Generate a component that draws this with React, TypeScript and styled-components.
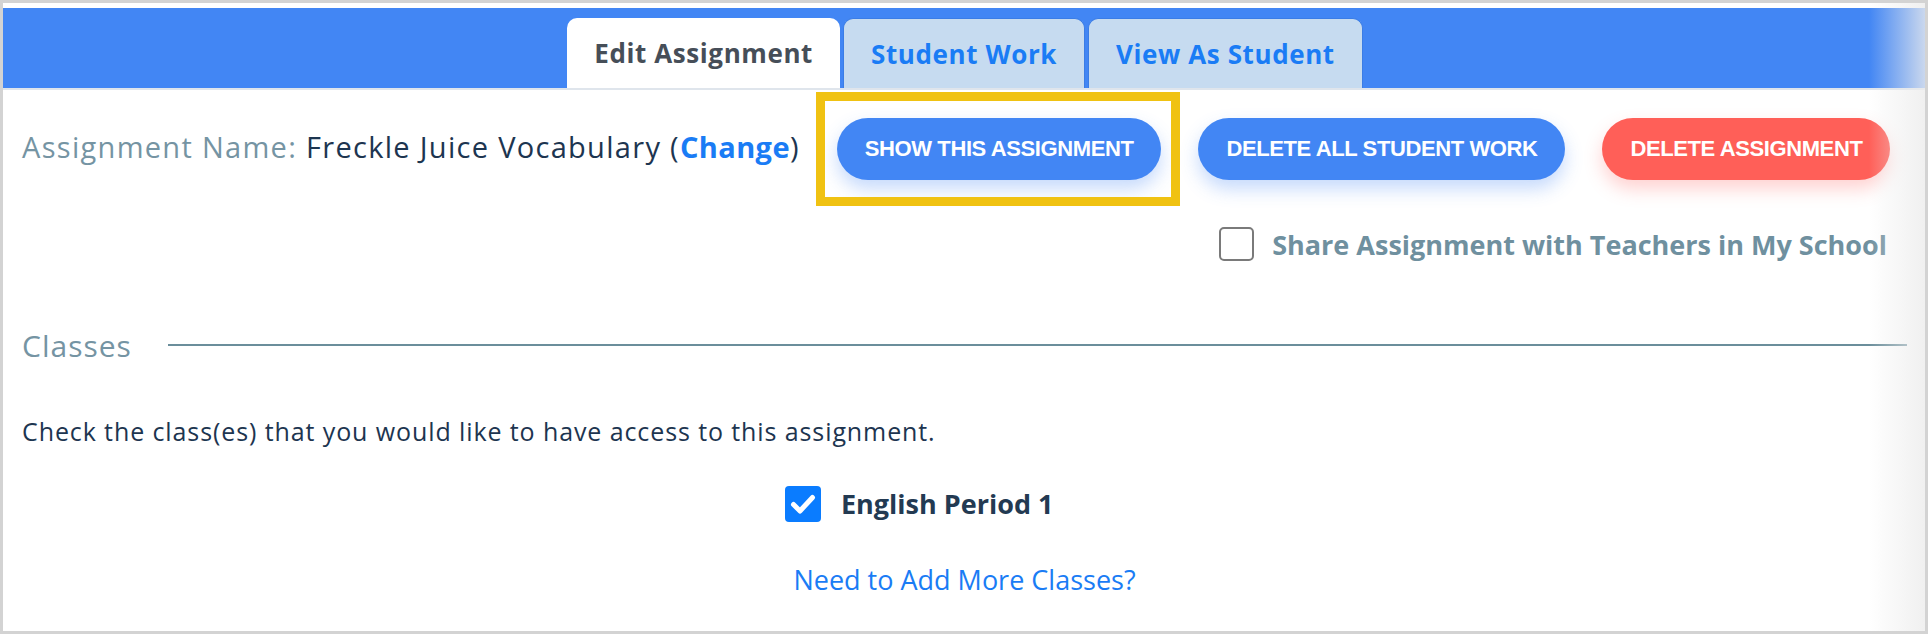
import styled, { createGlobalStyle, css } from "styled-components"

const GlobalStyle = createGlobalStyle`
  body {
    margin: 0;
    background: #ffffff;
  }
  * {
    box-sizing: border-box;
  }
`

const tabs = [
  { label: "Edit Assignment", active: true },
  { label: "Student Work", active: false },
  { label: "View As Student", active: false },
]

const App = () => {
  return (
    <>
      <GlobalStyle />
      <Frame>
        <Header>
          {tabs.map((t) => (
            <Tab key={t.label} $active={t.active}>
              {t.label}
            </Tab>
          ))}
        </Header>

        <Content>
          <TopRow>
            <NameLine>
              <NameLabel>Assignment Name:</NameLabel> Freckle Juice Vocabulary (
              <ChangeLink>Change</ChangeLink>)
            </NameLine>
            <Highlight>
              <PillButton $tone="blue">Show This Assignment</PillButton>
            </Highlight>
            <PillButton $tone="blue">Delete All Student Work</PillButton>
            <PillButton $tone="red">Delete Assignment</PillButton>
          </TopRow>

          <ShareRow>
            <EmptyBox />
            <ShareText>Share Assignment with Teachers in My School</ShareText>
          </ShareRow>

          <SectionHead>
            <SectionTitle>Classes</SectionTitle>
            <Rule />
          </SectionHead>

          <Hint>Check the class(es) that you would like to have access to this assignment.</Hint>

          <ClassRow>
            <CheckedBox>
              <svg width="36" height="36" viewBox="0 0 36 36">
                <path
                  d="M8.5 18.5 L15 25 L27.5 11.5"
                  fill="none"
                  stroke="#ffffff"
                  strokeWidth="5"
                  strokeLinecap="round"
                  strokeLinejoin="round"
                />
              </svg>
            </CheckedBox>
            <ClassName>English Period 1</ClassName>
          </ClassRow>

          <AddMore>Need to Add More Classes?</AddMore>
        </Content>
      </Frame>
    </>
  )
}

export default App

const Frame = styled.div`
  position: relative;
  width: 1928px;
  height: 634px;
  border: 3px solid #d3d3d3;
  padding-top: 5px;
  background: #ffffff;
  overflow: hidden;
  font-family: "Open Sans", "Liberation Sans", sans-serif;

  &::after {
    content: "";
    position: absolute;
    top: 0;
    right: 0;
    bottom: 0;
    width: 56px;
    background: linear-gradient(to right, rgba(238, 238, 238, 0), rgba(236, 236, 236, 0.8));
    pointer-events: none;
  }
`

const Header = styled.div`
  height: 82px;
  background: #4286f4;
  border-bottom: 2px solid #dfe5ec;
  display: flex;
  justify-content: center;
  align-items: flex-end;
  gap: 3px;
  padding-left: 2px;
`

const Tab = styled.div<{ $active: boolean }>`
  height: 70px;
  padding: 0 27px;
  display: flex;
  align-items: center;
  border-radius: 10px 10px 0 0;
  font-size: 26px;
  font-weight: 700;
  letter-spacing: 0.6px;
  ${({ $active }) =>
    $active
      ? css`
          background: #ffffff;
          color: #464e58;
        `
      : css`
          background: #c6dbf0;
          color: #1a7cf5;
          border: 1px solid #3b7de6;
          border-bottom: none;
        `}
`

const Content = styled.div`
  padding: 0 18px 0 19px;
`

const TopRow = styled.div`
  display: flex;
  align-items: center;
  gap: 37px;
  margin-top: 28px;
`

const NameLine = styled.div`
  font-size: 29px;
  letter-spacing: 1.3px;
  line-height: 40px;
  margin-top: -4px;
  color: #1d3550;
  white-space: nowrap;
`

const NameLabel = styled.span`
  color: #7594a3;
`

const ChangeLink = styled.span`
  color: #1a7cf5;
  font-weight: 700;
  letter-spacing: 0.4px;
`

const Highlight = styled.div`
  position: relative;
  display: flex;

  &::after {
    content: "";
    position: absolute;
    top: -26px;
    bottom: -26px;
    left: -21px;
    right: -19px;
    border: 9px solid #f0c212;
    pointer-events: none;
  }
`

const PillButton = styled.button<{ $tone: "blue" | "red" }>`
  height: 62px;
  padding: 0 28px;
  border: none;
  border-radius: 31px;
  font-family: "Liberation Sans", Arial, sans-serif;
  font-size: 22px;
  font-weight: 700;
  letter-spacing: -0.4px;
  text-transform: uppercase;
  color: #ffffff;
  white-space: nowrap;
  cursor: pointer;
  background: ${({ $tone }) => ($tone === "red" ? "#ff5f58" : "#4286f4")};
  box-shadow: ${({ $tone }) =>
    $tone === "red"
      ? "0 9px 18px rgba(255, 95, 88, 0.28)"
      : "0 9px 18px rgba(66, 134, 244, 0.3)"};
`

const ShareRow = styled.div`
  display: flex;
  justify-content: flex-end;
  align-items: center;
  gap: 18px;
  margin-top: 47px;
  padding-right: 20px;
  height: 34px;
`

const EmptyBox = styled.div`
  width: 35px;
  height: 34px;
  border: 2px solid #7a7a7a;
  border-radius: 5px;
  background: #ffffff;
`

const ShareText = styled.div`
  font-size: 27px;
  font-weight: 700;
  color: #6f909f;
  white-space: nowrap;
`

const SectionHead = styled.div`
  display: flex;
  align-items: center;
  gap: 36px;
  margin-top: 64px;
  height: 40px;
`

const SectionTitle = styled.div`
  font-size: 30px;
  letter-spacing: 1px;
  color: #7594a3;
`

const Rule = styled.div`
  flex: 1;
  height: 2px;
  background: #6b8e9b;
`

const Hint = styled.div`
  margin-top: 50px;
  font-size: 25px;
  letter-spacing: 0.9px;
  color: #1d3550;
  line-height: 32px;
`

const ClassRow = styled.div`
  display: flex;
  align-items: center;
  gap: 20px;
  margin-top: 38px;
  padding-left: 763px;
`

const CheckedBox = styled.div`
  width: 36px;
  height: 36px;
  border-radius: 4px;
  background: #0a7cff;
  display: flex;
`

const ClassName = styled.div`
  font-size: 27px;
  font-weight: 700;
  color: #233a52;
`

const AddMore = styled.div`
  margin-top: 39px;
  text-align: center;
  font-size: 27px;
  color: #1a7cf5;
`
